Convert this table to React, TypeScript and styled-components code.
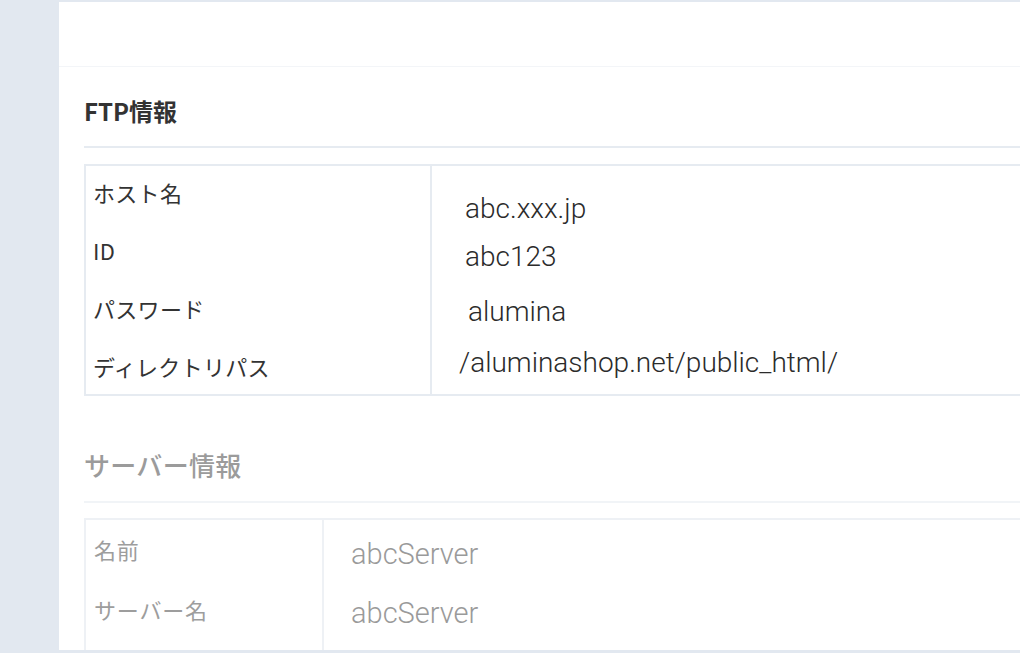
import React from "react";
import styled, { createGlobalStyle } from "styled-components";

const GlobalStyle = createGlobalStyle`
  html, body {
    margin: 0;
    padding: 0;
    background: #e2e8f0;
    overflow: hidden;
  }
  body {
    font-family: "Noto Sans CJK JP", "Noto Sans", sans-serif;
  }
`;

const Page = styled.div`
  height: 653px;
  padding: 2px 0 0 59px;
  box-sizing: border-box;
`;

const Panel = styled.main`
  background: #ffffff;
  height: 648px;
  overflow: hidden;
  display: flex;
  flex-direction: column;
`;

const TopBar = styled.div`
  height: 64px;
  flex-shrink: 0;
  border-bottom: 1px solid #f3f5f8;
`;

const Section = styled.section<{ $top: number }>`
  padding: ${(p) => p.$top}px 0 0 25px;
  flex-shrink: 0;
`;

const SectionTitle = styled.h2<{ $faded?: boolean }>`
  margin: 0;
  font-family: "Noto Sans CJK JP", sans-serif;
  font-size: ${(p) => (p.$faded ? 26 : 24)}px;
  line-height: 36px;
  font-weight: ${(p) => (p.$faded ? 500 : 700)};
  color: ${(p) => (p.$faded ? "#9b9b9b" : "#333333")};
  letter-spacing: ${(p) => (p.$faded ? "0.3px" : "0")};
`;

const Divider = styled.div<{ $faded?: boolean; $mt: number }>`
  margin-top: ${(p) => p.$mt}px;
  height: 2px;
  background: ${(p) => (p.$faded ? "#f1f4f7" : "#e6ebf1")};
`;

const Table = styled.div<{ $faded?: boolean; $labelWidth: number; $mt: number }>`
  margin-top: ${(p) => p.$mt}px;
  display: grid;
  grid-template-columns: ${(p) => p.$labelWidth}px 1fr;
  border: 2px solid ${(p) => (p.$faded ? "#eef1f5" : "#e6ebf1")};
  border-right: none;
`;

const LabelCell = styled.div<{ $faded?: boolean; $pt: number; $gap: number; $pb: number }>`
  display: flex;
  flex-direction: column;
  gap: ${(p) => p.$gap}px;
  padding: ${(p) => p.$pt}px 10px ${(p) => p.$pb}px ${(p) => (p.$faded ? 8 : 7)}px;
  border-right: 2px solid ${(p) => (p.$faded ? "#eef1f5" : "#e6ebf1")};
`;

const Label = styled.div<{ $faded?: boolean }>`
  font-family: "Noto Sans CJK JP", sans-serif;
  font-size: 22px;
  line-height: 32px;
  letter-spacing: ${(p) => (p.$faded ? "0.8px" : "0.3px")};
  color: ${(p) => (p.$faded ? "#9d9d9d" : "#333333")};
  white-space: nowrap;
`;

const ValueCell = styled.div<{ $pt: number; $pl: number }>`
  display: flex;
  flex-direction: column;
  padding: ${(p) => p.$pt}px 0 0 ${(p) => p.$pl}px;
`;

const Value = styled.div<{ $faded?: boolean; $shift: number; $mt: number }>`
  margin-top: ${(p) => p.$mt}px;
  margin-left: ${(p) => p.$shift}px;
  font-family: Roboto, "Noto Sans", sans-serif;
  font-weight: 300;
  font-size: ${(p) => (p.$faded ? 29 : 28)}px;
  line-height: 36px;
  color: ${(p) => (p.$faded ? "#9a9a9a" : "#2b2b2b")};
  white-space: nowrap;
`;

const ftpLabels = ["ホスト名", "ID", "パスワード", "ディレクトリパス"];
const ftpValues = [
  { text: "abc.xxx.jp", shift: 7, mt: 0 },
  { text: "abc123", shift: 7, mt: 12 },
  { text: "alumina", shift: 10, mt: 19 },
  { text: "/aluminashop.net/public_html/", shift: 1, mt: 15 },
];

const serverLabels = ["名前", "サーバー名"];
const serverValues = [
  { text: "abcServer", shift: 0, mt: 0 },
  { text: "abcServer", shift: 0, mt: 23 },
];

export default function App() {
  return (
    <>
      <GlobalStyle />
      <Page>
        <Panel>
          <TopBar />
          <Section $top={26}>
            <SectionTitle>FTP情報</SectionTitle>
            <Divider $mt={17} />
            <Table $labelWidth={346} $mt={16}>
              <LabelCell $pt={10} $gap={26} $pb={12}>
                {ftpLabels.map((l) => (
                  <Label key={l}>{l}</Label>
                ))}
              </LabelCell>
              <ValueCell $pt={25} $pl={26}>
                {ftpValues.map((v) => (
                  <Value key={v.text} $shift={v.shift} $mt={v.mt}>
                    {v.text}
                  </Value>
                ))}
              </ValueCell>
            </Table>
          </Section>
          <Divider $faded $mt={15} />
          <Section $top={36}>
            <SectionTitle $faded>サーバー情報</SectionTitle>
            <Divider $faded $mt={18} />
            <Table $faded $labelWidth={238} $mt={15}>
              <LabelCell $faded $pt={13} $gap={28} $pb={40}>
                {serverLabels.map((l) => (
                  <Label $faded key={l}>
                    {l}
                  </Label>
                ))}
              </LabelCell>
              <ValueCell $pt={16} $pl={27}>
                {serverValues.map((v, i) => (
                  <Value $faded key={i} $shift={v.shift} $mt={v.mt}>
                    {v.text}
                  </Value>
                ))}
              </ValueCell>
            </Table>
          </Section>
        </Panel>
      </Page>
    </>
  );
}
